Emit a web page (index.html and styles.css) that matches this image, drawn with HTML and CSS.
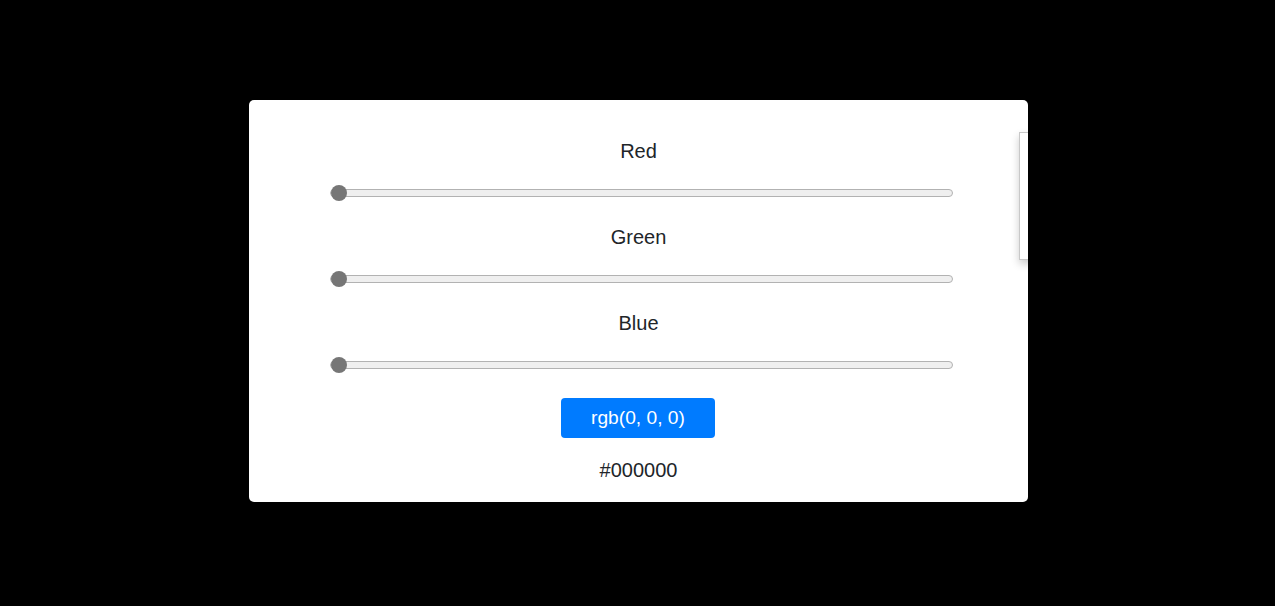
FILE: index.html
```html
<!DOCTYPE html>
<html>
<head>
<meta charset="utf-8">
<link rel="stylesheet" href="styles.css">
</head>
<body>
<div class="card">
  <div class="panel"></div>
  <div class="content">
    <div class="group">
      <div class="label">Red</div>
      <input class="slider" type="range" min="0" max="255" value="0">
    </div>
    <div class="group">
      <div class="label">Green</div>
      <input class="slider" type="range" min="0" max="255" value="0">
    </div>
    <div class="group">
      <div class="label">Blue</div>
      <input class="slider" type="range" min="0" max="255" value="0">
    </div>
    <button class="btn">rgb(0, 0, 0)</button>
    <div class="hex">#000000</div>
  </div>
</div>
</body>
</html>
```
FILE: styles.css
```css
html, body {
  margin: 0;
  padding: 0;
  background: #000;
  height: 100%;
}
body {
  padding: 100px 0 0 249px;
  box-sizing: border-box;
  font-family: "Liberation Sans", Arial, sans-serif;
  color: #212529;
}
.card {
  position: relative;
  width: 779px;
  height: 402px;
  background: #fff;
  border-radius: 5px;
  overflow: hidden;
  box-sizing: border-box;
  padding: 37.5px 0 0 0;
}
.panel {
  position: absolute;
  left: 770px;
  top: 32px;
  width: 200px;
  height: 126px;
  border: 1px solid #c8c8c8;
  background: #fff;
  box-shadow: 0 4px 8px rgba(0,0,0,0.2);
}
.content {
  width: 623px;
  margin: 0 auto;
  display: flex;
  flex-direction: column;
  align-items: center;
}
.group {
  width: 100%;
  display: flex;
  flex-direction: column;
  align-items: stretch;
}
.label {
  font-size: 20px;
  line-height: 27px;
  margin-bottom: 20px;
  text-align: center;
}
.slider {
  -webkit-appearance: none;
  appearance: none;
  width: auto;
  height: 16px;
  margin: 0 -3px 23px 3px;
  padding: 0;
  background: transparent;
  display: block;
}
.slider::-webkit-slider-runnable-track {
  height: 8px;
  background: #efefef;
  border: 1px solid #b2b2b2;
  border-radius: 5px;
  box-sizing: border-box;
}
.slider::-webkit-slider-thumb {
  -webkit-appearance: none;
  width: 16px;
  height: 16px;
  border-radius: 50%;
  background: #767676;
  border: none;
  margin-top: -5px;
}
.btn {
  width: 154px;
  height: 40px;
  background: #007bff;
  color: #fff;
  border: none;
  border-radius: 4px;
  font-family: "Liberation Sans", Arial, sans-serif;
  font-size: 19.2px;
  padding: 0;
  margin: 2px 0 0 -1px;
}
.hex {
  font-size: 20px;
  line-height: 27px;
  margin-top: 19.5px;
}
```
